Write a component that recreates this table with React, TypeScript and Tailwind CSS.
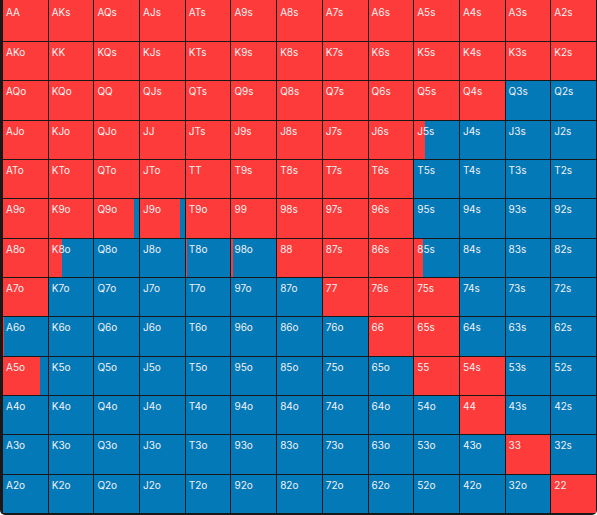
import React from 'react';

const RANKS = 'AKQJT98765432';
const RED = '#fd3b3b';
const BLUE = '#0479b8';

// red share of each cell, by row then column; anything not listed is blue
const redShare: Record<string, number> = {};
const fill = (row: number, from: number, to: number, v = 1) => {
  for (let c = from; c <= to; c++) redShare[`${row}-${c}`] = v;
};
fill(0, 0, 12);
fill(1, 0, 12);
fill(2, 0, 10);
fill(3, 0, 8);
fill(3, 9, 9, 0.25);
fill(4, 0, 8);
fill(5, 0, 1);
fill(5, 2, 3, 0.89);
fill(5, 4, 8);
fill(6, 0, 0);
fill(6, 1, 1, 0.3);
fill(6, 4, 4, 0.03);
fill(6, 5, 5, 0.05);
fill(6, 6, 8);
fill(6, 9, 9, 0.2);
fill(7, 0, 0);
fill(7, 7, 9);
fill(8, 0, 0, 0.03);
fill(8, 8, 9);
fill(9, 0, 0, 0.82);
fill(9, 9, 10);
fill(10, 10, 10);
fill(11, 11, 11);
fill(12, 12, 12);

const handName = (r: number, c: number) => {
  if (r === c) return RANKS[r] + RANKS[c];
  if (r < c) return RANKS[r] + RANKS[c] + 's';
  return RANKS[c] + RANKS[r] + 'o';
};

const Cell = ({ r, c }: { r: number; c: number }) => {
  const share = redShare[`${r}-${c}`] ?? 0;
  const pct = share * 100;
  return (
    <div
      className={`text-[10px] font-normal leading-[12px] text-[#f2f2f2] pl-[3px] ${r === 0 ? 'pt-[6px]' : 'pt-[4px]'}`}
      style={{ background: `linear-gradient(to right, ${RED} ${pct}%, ${BLUE} ${pct}%)` }}
    >
      {handName(r, c)}
    </div>
  );
};

export default function App() {
  return (
    <div className="w-[597px] h-[515px] bg-[#181818] rounded-b-[5px] pl-[3px] pr-[1px] pb-[2px] font-['Inter',sans-serif] overflow-hidden">
      <div className="h-full grid grid-cols-[repeat(13,minmax(0,1fr))] grid-rows-[41px_repeat(12,minmax(0,1fr))] gap-px">
        {Array.from({ length: 13 }).map((_, r) =>
          Array.from({ length: 13 }).map((_, c) => <Cell key={`${r}-${c}`} r={r} c={c} />)
        )}
      </div>
    </div>
  );
}
